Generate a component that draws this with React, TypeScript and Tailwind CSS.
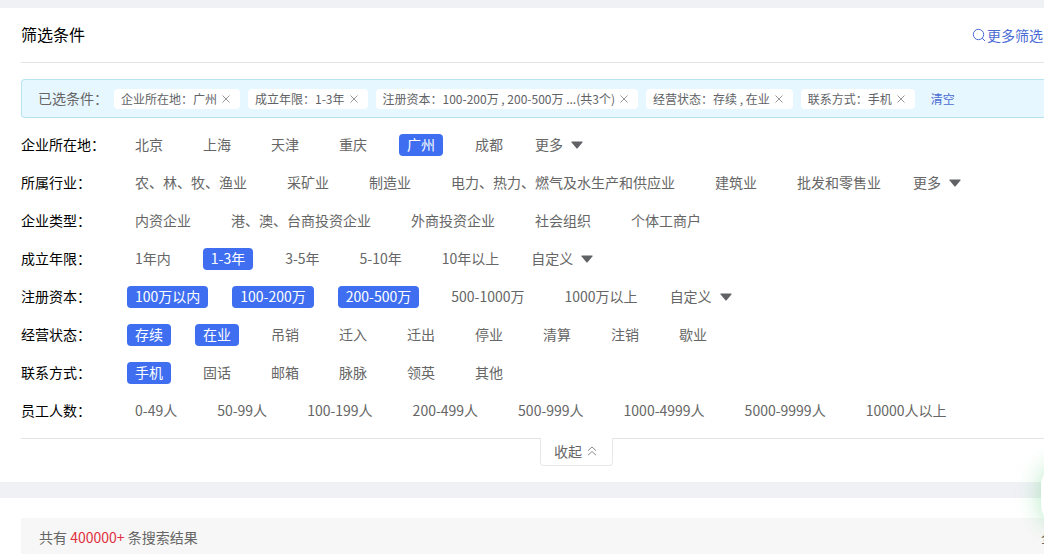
import {useState} from "react";
import clsx from "clsx";

type FilterRow = {
    label: string;
    options: string[];
    more?: string;
};

const FILTER_ROWS: FilterRow[] = [
    {label: '企业所在地', options: ['北京', '上海', '天津', '重庆', '广州', '成都'], more: '更多'},
    {
        label: '所属行业',
        options: ['农、林、牧、渔业', '采矿业', '制造业', '电力、热力、燃气及水生产和供应业', '建筑业', '批发和零售业'],
        more: '更多',
    },
    {label: '企业类型', options: ['内资企业', '港、澳、台商投资企业', '外商投资企业', '社会组织', '个体工商户']},
    {label: '成立年限', options: ['1年内', '1-3年', '3-5年', '5-10年', '10年以上'], more: '自定义'},
    {
        label: '注册资本',
        options: ['100万以内', '100-200万', '200-500万', '500-1000万', '1000万以上'],
        more: '自定义',
    },
    {label: '经营状态', options: ['存续', '在业', '吊销', '迁入', '迁出', '停业', '清算', '注销', '歇业']},
    {label: '联系方式', options: ['手机', '固话', '邮箱', '脉脉', '领英', '其他']},
    {
        label: '员工人数',
        options: ['0-49人', '50-99人', '100-199人', '200-499人', '500-999人', '1000-4999人', '5000-9999人', '10000人以上'],
    },
];

const CHIPS = [
    '企业所在地：广州',
    '成立年限：1-3年',
    '注册资本：100-200万 , 200-500万 ...(共3个)',
    '经营状态：存续 , 在业',
    '联系方式：手机',
];

const INITIAL_SELECTED = ['广州', '1-3年', '100万以内', '100-200万', '200-500万', '存续', '在业', '手机'];

const SearchIcon = () => (
    <svg width="14" height="14" viewBox="0 0 14 14" fill="none" stroke="currentColor" aria-hidden="true">
        <circle cx="6.5" cy="6.5" r="5.2"/>
        <path d="M10.2 10.2L13 13"/>
    </svg>
);

const CloseIcon = () => (
    <svg width="8" height="8" viewBox="0 0 8 8" stroke="#999" aria-hidden="true">
        <path d="M0.5 0.5L7.5 7.5M7.5 0.5L0.5 7.5"/>
    </svg>
);

const CaretIcon = () => (
    <svg width="12" height="8" viewBox="0 0 12 8" fill="#606266" aria-hidden="true">
        <path d="M1 0.5H11Q12 0.5 11.4 1.4L6.6 7.2Q6 7.8 5.4 7.2L0.6 1.4Q0 0.5 1 0.5Z"/>
    </svg>
);

const DoubleUpIcon = () => (
    <svg width="10" height="10" viewBox="0 0 10 10" fill="none" stroke="#8c8c8c" aria-hidden="true">
        <path d="M1 4.7L5 1L9 4.7M1 9.2L5 5.5L9 9.2"/>
    </svg>
);

const Chip = ({text}: {text: string}) => (
    <span className="flex h-5 items-center gap-[5px] whitespace-nowrap rounded bg-white pl-[7px] pr-[10px] text-xs text-[#606266]">
        {text}
        <button type="button" aria-label={`移除${text}`}>
            <CloseIcon/>
        </button>
    </span>
);

const App = () => {
    const [selected, setSelected] = useState(INITIAL_SELECTED);

    const toggle = (option: string) => {
        setSelected((prev) => prev.includes(option) ? prev.filter((o) => o !== option) : [...prev, option]);
    };

    return (
        <div className="relative min-h-screen overflow-hidden bg-[#f0f1f5] pt-2 font-['Noto_Sans_CJK_SC',sans-serif] text-sm text-[#666]">
            <section className="bg-white pb-4 pl-[21px]">
                <header className="flex h-[55px] items-center justify-between border-b border-[#e4e4e4] pr-px">
                    <h1 className="pb-0.5 text-base text-black">筛选条件</h1>
                    <a href="#more" className="flex items-center gap-px text-[#4a6cd4]">
                        <SearchIcon/>
                        更多筛选
                    </a>
                </header>

                {/* Selected filters */}
                <div className="mt-4 flex h-[39px] items-center whitespace-nowrap rounded-l border border-r-0 border-[#b9e3f0] bg-[#e6f7ff] pl-4">
                    <span className="mr-1.5 pb-0.5">已选条件：</span>
                    <div className="flex gap-2">
                        {CHIPS.map((text) => <Chip key={text} text={text}/>)}
                    </div>
                    <button type="button" className="ml-4 text-xs text-[#4a6cd4]" onClick={() => setSelected([])}>
                        清空
                    </button>
                </div>

                {/* Filter rows */}
                <div className="mt-4 space-y-4">
                    {FILTER_ROWS.map(({label, options, more}) => (
                        <div key={label} role="group" aria-label={label} className="flex h-[22px] items-center whitespace-nowrap">
                            <span className="w-[106px] shrink-0 pb-0.5 text-black">{label}：</span>
                            <div className="flex gap-6">
                                {options.map((option) => (
                                    <button
                                        key={option}
                                        type="button"
                                        aria-pressed={selected.includes(option)}
                                        onClick={() => toggle(option)}
                                        className={clsx(
                                            'h-[22px] rounded px-2 pb-0.5',
                                            selected.includes(option) && 'bg-[#3f6ff0] text-white',
                                        )}
                                    >
                                        {option}
                                    </button>
                                ))}
                                {more && (
                                    <button type="button" className="flex items-center gap-2">
                                        <span className="pb-0.5">{more}</span>
                                        <CaretIcon/>
                                    </button>
                                )}
                            </div>
                        </div>
                    ))}
                </div>

                {/* Collapse tab */}
                <div className="mt-4 flex justify-center border-t border-[#e4e4e4] pl-[88px]">
                    <button
                        type="button"
                        className="-mt-px flex h-7 items-center gap-[5px] rounded-b border border-t-0 border-[#e8e8e8] bg-white pb-0.5 pl-[13px] pr-[15px]"
                    >
                        收起
                        <DoubleUpIcon/>
                    </button>
                </div>
            </section>

            <section className="mt-4 bg-white pl-[21px] pt-5">
                <div className="flex h-[39px] items-center justify-between bg-[#f7f7f7] pb-0.5 pl-[18px]">
                    <p>共有 <span className="text-[#e02f3c]">400000+</span> 条搜索结果</p>
                    <span className="w-[3px] whitespace-nowrap">全部</span>
                </div>
            </section>

            {/* Floating service button */}
            <button
                type="button"
                aria-label="客服"
                className="absolute -right-[57px] top-[465px] size-[60px] rounded-[20px] bg-white shadow-[0_0_24px_rgba(60,200,100,0.4)]"
            />
        </div>
    );
};

export default App;
